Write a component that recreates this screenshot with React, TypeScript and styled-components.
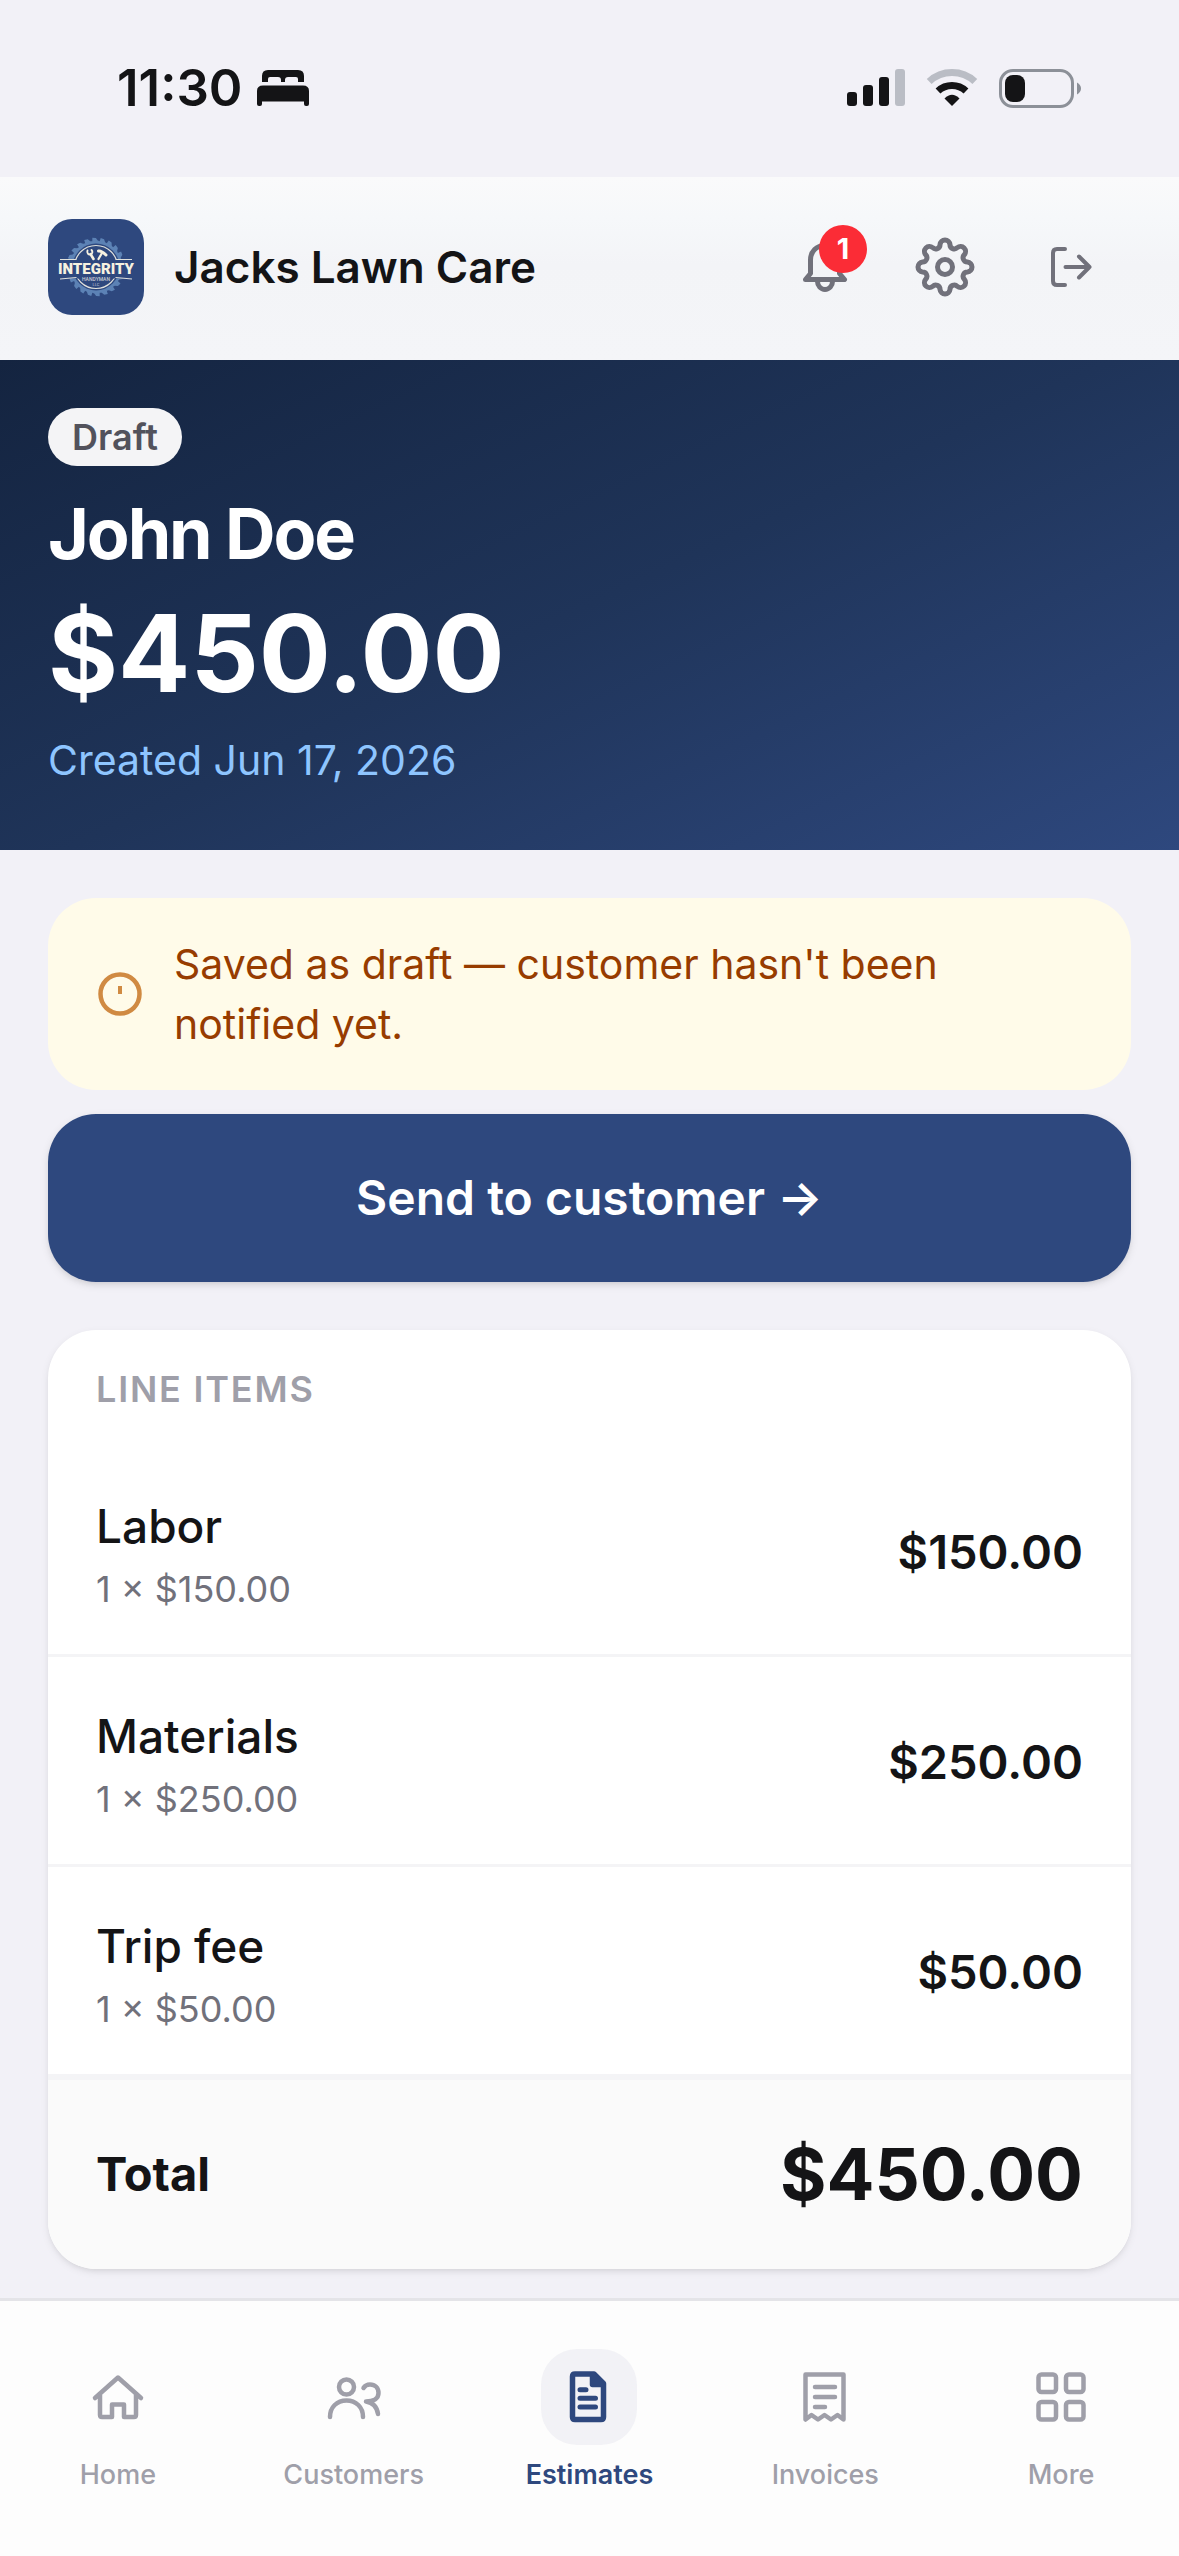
import React from "react";
import styled, { createGlobalStyle } from "styled-components";

const navy = "#2e487e";
const ink = "#141416";
const muted = "#71717b";
const faint = "#9f9fa9";
const canvas = "#f2f1f7";
const line = "#f4f4f6";

const GlobalStyle = createGlobalStyle`
  * { box-sizing: border-box; }
  body {
    margin: 0;
    background: ${canvas};
    color: ${ink};
    font-family: Inter, "Liberation Sans", sans-serif;
    -webkit-font-smoothing: antialiased;
  }
  button { font: inherit; border: 0; padding: 0; background: none; cursor: pointer; }
  h1, h2, p, ul { margin: 0; padding: 0; }
  ul { list-style: none; }
  svg { display: block; flex: none; }
`;

const Page = styled.div`
  display: flex;
  flex-direction: column;
  min-height: 100vh;
`;

const StatusBar = styled.div`
  display: flex;
  align-items: center;
  justify-content: space-between;
  padding: 58px 98px 59px 117px;
`;

const StatusGroup = styled.div<{ $gap: number }>`
  display: flex;
  align-items: center;
  gap: ${(p) => p.$gap}px;
`;

const Clock = styled.span`
  font-size: 51px;
  line-height: 60px;
  font-weight: 600;
`;

const Header = styled.header`
  display: flex;
  align-items: center;
  gap: 30px;
  padding: 42px 48px 45px;
  background: linear-gradient(#fafafb, #f6f8fa 22%, #f3f4f7 48%, #f4f5f8);
`;

const Company = styled.span`
  flex: 1;
  font-size: 44px;
  line-height: 60px;
  font-weight: 600;
`;

const Actions = styled.div<{ $gap: number }>`
  display: flex;
  gap: ${(p) => p.$gap}px;
`;

const IconButton = styled.button`
  position: relative;
  display: flex;
  align-items: center;
  justify-content: center;
  width: 120px;
  height: 96px;
  color: ${muted};
`;

const Badge = styled.span`
  position: absolute;
  top: 6px;
  right: 18px;
  width: 48px;
  height: 48px;
  border-radius: 50%;
  background: #fb2c36;
  color: #fff;
  font-size: 29px;
  line-height: 48px;
  font-weight: 700;
  text-align: center;
`;

const Hero = styled.section`
  display: flex;
  flex-direction: column;
  align-items: flex-start;
  padding: 48px 48px 60px;
  color: #fff;
  background: linear-gradient(155deg, #142440 0%, #1f3459 50%, ${navy} 100%);
`;

const Pill = styled.span`
  padding: 5px 24px;
  border-radius: 29px;
  background: #f4f4f6;
  color: #52525c;
  font-size: 36px;
  line-height: 48px;
  font-weight: 600;
`;

const CustomerName = styled.h1`
  margin-top: 24px;
  font-size: 70px;
  line-height: 88px;
  font-weight: 700;
  letter-spacing: -0.03em;
`;

const HeroAmount = styled.p`
  margin-top: 12px;
  font-size: 107px;
  line-height: 126px;
  font-weight: 700;
`;

const Created = styled.p`
  margin-top: 14px;
  color: #8ec5ff;
  font-size: 41px;
  line-height: 60px;
`;

const Main = styled.main`
  display: flex;
  flex-direction: column;
  padding: 48px 48px 29px;
`;

const Notice = styled.div`
  display: flex;
  align-items: center;
  gap: 30px;
  padding: 36px 48px;
  border-radius: 48px;
  background: #fffbe9;
  color: #973c00;
  font-size: 41px;
  line-height: 60px;
`;

const SendButton = styled.button`
  && {
    margin-top: 24px;
    padding: 54px 48px;
    border-radius: 48px;
    background: ${navy};
    color: #fff;
    font-size: 48px;
    line-height: 60px;
    font-weight: 600;
    box-shadow: 0 3px 9px rgba(0, 0, 0, 0.1), 0 3px 6px -3px rgba(0, 0, 0, 0.1);
  }
`;

const Card = styled.section`
  margin-top: 48px;
  overflow: hidden;
  border-radius: 48px;
  background: #fff;
  box-shadow: 0 3px 9px rgba(0, 0, 0, 0.07), 0 3px 6px -3px rgba(0, 0, 0, 0.1);
`;

const CardTitle = styled.h2`
  padding: 35px 48px 34px;
  color: ${faint};
  font-size: 36px;
  line-height: 48px;
  font-weight: 600;
  letter-spacing: 0.05em;
  text-transform: uppercase;
`;

const Item = styled.li`
  display: flex;
  align-items: center;
  justify-content: space-between;
  padding: 43px 48px 41px;

  & + & { border-top: 3px solid ${line}; }
`;

const ItemText = styled.div`
  display: flex;
  flex-direction: column;
  gap: 3px;
`;

const ItemName = styled.span`
  font-size: 46px;
  line-height: 72px;
  font-weight: 500;
`;

const ItemQuantity = styled.span`
  color: ${muted};
  font-size: 36px;
  line-height: 48px;
`;

const ItemPrice = styled.span`
  font-size: 47px;
  line-height: 60px;
  font-weight: 600;
`;

const TotalRow = styled.div`
  display: flex;
  align-items: center;
  justify-content: space-between;
  padding: 46px 48px 47px;
  border-top: 6px solid ${line};
  background: #fafafa;
  line-height: 96px;
  font-weight: 700;
`;

const TotalLabel = styled.span`
  font-size: 47px;
`;

const TotalAmount = styled.span`
  font-size: 71px;
`;

const TabBar = styled.nav`
  position: sticky;
  bottom: 0;
  display: grid;
  grid-template-columns: repeat(5, 1fr);
  margin-top: auto;
  padding: 48px 0 63px;
  border-top: 3px solid #e4e4e8;
  background: #fdfdfd;
`;

const Tab = styled.a<{ $active?: boolean }>`
  display: flex;
  flex-direction: column;
  align-items: center;
  gap: 12px;
  color: ${(p) => (p.$active ? navy : faint)};
  font-size: 27px;
  line-height: 36px;
  font-weight: ${(p) => (p.$active ? 600 : 500)};
  text-decoration: none;
`;

const TabIcon = styled.span<{ $active?: boolean }>`
  display: flex;
  align-items: center;
  justify-content: center;
  width: 96px;
  height: 96px;
  border-radius: 36px;
  background: ${(p) => (p.$active ? "#f2f2f6" : "transparent")};
`;

type IconProps = { stroke?: number; children: React.ReactNode };

const Icon = ({ stroke = 5, children }: IconProps) => (
  <svg
    width="60"
    height="60"
    viewBox="0 0 60 60"
    fill="none"
    stroke="currentColor"
    strokeWidth={stroke}
    strokeLinecap="round"
    strokeLinejoin="round"
    aria-hidden="true"
  >
    {children}
  </svg>
);

const point = (radius: number, degrees: number, center: number) => {
  const a = (degrees * Math.PI) / 180;
  return `${(center + radius * Math.cos(a)).toFixed(2)} ${(center + radius * Math.sin(a)).toFixed(2)}`;
};

/* Eight round lobes joined by round valleys. */
const gearPath = (() => {
  let d = `M${point(23, -12.5, 30)}`;
  for (let i = 0; i < 8; i++) {
    d += `A5 5 0 0 1 ${point(23, i * 45 + 12.5, 30)}`;
    d += `A4.3 4.3 0 0 0 ${point(23, i * 45 + 32.5, 30)}`;
  }
  return d + "Z";
})();

/* Saw blade with slanted teeth. */
const sawPath = (() => {
  const teeth = 22;
  const step = 360 / teeth;
  let d = "";
  for (let i = 0; i < teeth; i++) {
    const a = i * step;
    d += `${i ? "L" : "M"}${point(26, a, 48)}L${point(29.5, a + 1, 48)}L${point(29, a + 8, 48)}L${point(26.5, a + 12, 48)}`;
  }
  return d + "Z";
})();

const Logo = () => (
  <svg width="96" height="96" viewBox="0 0 96 96" role="img" aria-label="Integrity Handyman LLC">
    <rect width="96" height="96" rx="24" fill={navy} />
    <path d={sawPath} fill="#5c82b5" />
    <circle cx="48" cy="48" r="23.5" fill={navy} />
    <circle cx="48" cy="48" r="21.5" fill="none" stroke="#dfe0dc" strokeWidth="1.2" />
    <rect x="10" y="40.5" width="76" height="19" fill={navy} />
    <path d="M12 40.5H28.5M67.5 40.5H84M12 60L28.5 58.5M67.5 58.5L84 60" stroke="#dfe0dc" strokeWidth="1.1" fill="none" />
    <g stroke="#f6f1e0" strokeLinecap="round" fill="none">
      <path d="M42.5 35L45.5 40" strokeWidth="2.6" />
      <path d="M39.5 31.5C38.5 34 40.5 36 42.5 35.5S45 32.5 43.5 31" strokeWidth="1.9" />
      <path d="M54 34L50.5 40" strokeWidth="2.2" />
      <path d="M50.5 32C53 31.5 55 33 58 36" strokeWidth="3" />
    </g>
    <g fill="#f6f1e0" textAnchor="middle" fontFamily="Roboto, sans-serif">
      <text x="48" y="55" fontSize="15" fontWeight="900">INTEGRITY</text>
      <text x="48" y="61.5" fontSize="5" fontWeight="500" fill="#c9cdd3">HANDYMAN</text>
      <text x="48" y="66.5" fontSize="4" fontWeight="500" fill="#aab4c6">LLC</text>
    </g>
  </svg>
);

const BedIcon = () => (
  <svg width="52" height="36" viewBox="0 0 52 36" fill={ink} aria-hidden="true">
    <path d="M5 12V6Q5 0 11 0H41Q47 0 47 6V12H41V9Q41 7 39 7H31Q28 7 28 10V12H24V10Q24 7 21 7H13Q11 7 11 9V12Z" />
    <path d="M0 21Q0 15.5 6 15.5H46Q52 15.5 52 21V34Q52 36 50 36H49Q47 36 47 34V31.5H5V34Q5 36 3 36H2Q0 36 0 34Z" />
  </svg>
);

const SignalIcon = () => (
  <svg width="58" height="38" viewBox="0 0 58 38" fill={ink} aria-hidden="true">
    <rect x="0" y="23" width="10" height="14" rx="3" />
    <rect x="16" y="16" width="10" height="21" rx="3" />
    <rect x="32" y="8" width="10" height="29" rx="3" />
    <rect x="48" y="0" width="10" height="37" rx="3" fill="#babdc5" />
  </svg>
);

const WifiIcon = () => (
  <svg width="52" height="38" viewBox="0 0 52 38" fill="none" strokeWidth="7" aria-hidden="true">
    <path d="M3.2 12.5A33.5 33.5 0 0 1 48.8 12.5" stroke="#babdc5" />
    <path d="M12 22A20.5 20.5 0 0 1 40 22" stroke={ink} />
    <path d="M26 37L18.5 29.5Q26 22 33.5 29.5Z" fill={ink} />
  </svg>
);

const BatteryIcon = () => (
  <svg width="82" height="39" viewBox="0 0 82 39" aria-hidden="true">
    <rect x="1.5" y="1.5" width="72" height="36" rx="12.5" fill="none" stroke="#8c9098" strokeWidth="3" />
    <rect x="6" y="6" width="20" height="27" rx="8" fill={ink} />
    <path d="M78 13.5Q82 16 82 19.5T78 25.5Z" fill="#8c9098" />
  </svg>
);

const NoticeIcon = () => (
  <svg width="48" height="48" viewBox="0 0 48 48" fill="none" stroke="#d08a42" aria-hidden="true">
    <circle cx="24" cy="24" r="19.5" strokeWidth="4.5" />
    <path d="M24 16V24" strokeWidth="4" />
  </svg>
);

const items = [
  { name: "Labor", quantity: "1 × $150.00", price: "$150.00" },
  { name: "Materials", quantity: "1 × $250.00", price: "$250.00" },
  { name: "Trip fee", quantity: "1 × $50.00", price: "$50.00" },
];

const tabs = [
  {
    label: "Home",
    icon: (
      <Icon stroke={4.5}>
        <path d="M7 31L30 10.5L53 31M12 27V48Q12 50 14 50H24V37.5H36V50H46Q48 50 48 48V27" />
      </Icon>
    ),
  },
  {
    label: "Customers",
    icon: (
      <Icon stroke={4.5}>
        <circle cx="22.5" cy="20" r="7.5" />
        <path d="M6 50C6 40 13 33.5 22.5 33.5S39 40 39 50" />
        <path d="M39.5 21C41 18.5 43.5 17.5 46 17.5C51 17.5 54.5 21 54.5 26C54.5 31 50.5 34.5 42 34.5C48.5 35.5 53 40 54 47" />
      </Icon>
    ),
  },
  {
    label: "Estimates",
    active: true,
    icon: (
      <Icon stroke={5.5}>
        <path d="M16 7H35L44.5 16.5V50Q44.5 52.5 42 52.5H16Q13.5 52.5 13.5 50V9.5Q13.5 7 16 7Z" />
        <path d="M33.5 8V17.5H43Z" fill="currentColor" />
        <path d="M21 22.7H27M21 31.3H36.5M21 40H36.5" strokeWidth="5" />
      </Icon>
    ),
  },
  {
    label: "Invoices",
    icon: (
      <Icon stroke={4.5}>
        <path d="M10.5 52.5V7.5H48.5V52.5L42.5 48L36 52.5L29.5 48L23 52.5L16.5 48Z" />
        <path d="M20 20H40M20 30H40M20 40H30" />
      </Icon>
    ),
  },
  {
    label: "More",
    icon: (
      <Icon stroke={4.5}>
        <rect x="7.5" y="7.5" width="17.5" height="17.5" rx="3" />
        <rect x="35" y="7.5" width="17.5" height="17.5" rx="3" />
        <rect x="7.5" y="35" width="17.5" height="17.5" rx="3" />
        <rect x="35" y="35" width="17.5" height="17.5" rx="3" />
      </Icon>
    ),
  },
];

export default function App() {
  return (
    <Page>
      <GlobalStyle />
      <StatusBar>
        <StatusGroup $gap={15}>
          <Clock>11:30</Clock>
          <BedIcon />
        </StatusGroup>
        <StatusGroup $gap={21}>
          <SignalIcon />
          <WifiIcon />
          <BatteryIcon />
        </StatusGroup>
      </StatusBar>

      <Header>
        <Logo />
        <Company>Jacks Lawn Care</Company>
        <Actions $gap={6}>
          <Actions $gap={0}>
            <IconButton type="button" aria-label="Notifications">
              <Icon>
                <path d="M10.5 42.5L15.5 36.5V23C15.5 14.5 21.5 8.5 30 8.5S44.5 14.5 44.5 23V36.5L49.5 42.5Z" />
                <path d="M22.5 44.5A7.5 8 0 0 0 37.5 44.5" />
              </Icon>
              <Badge>1</Badge>
            </IconButton>
            <IconButton type="button" aria-label="Settings">
              <Icon>
                <path d={gearPath} />
                <circle cx="30" cy="30" r="7.5" />
              </Icon>
            </IconButton>
          </Actions>
          <IconButton type="button" aria-label="Log out">
            <Icon stroke={4}>
              <path d="M24 12H16Q12 12 12 16V44Q12 48 16 48H24M24.5 30H48.5M38 19.5L48.5 30L38 40.5" />
            </Icon>
          </IconButton>
        </Actions>
      </Header>

      <Hero>
        <Pill>Draft</Pill>
        <CustomerName>John Doe</CustomerName>
        <HeroAmount>$450.00</HeroAmount>
        <Created>Created Jun 17, 2026</Created>
      </Hero>

      <Main>
        <Notice role="status">
          <NoticeIcon />
          <p>Saved as draft — customer hasn't been notified yet.</p>
        </Notice>
        <SendButton type="button">Send to customer →</SendButton>

        <Card>
          <CardTitle>Line items</CardTitle>
          <ul>
            {items.map((item) => (
              <Item key={item.name}>
                <ItemText>
                  <ItemName>{item.name}</ItemName>
                  <ItemQuantity>{item.quantity}</ItemQuantity>
                </ItemText>
                <ItemPrice>{item.price}</ItemPrice>
              </Item>
            ))}
          </ul>
          <TotalRow>
            <TotalLabel>Total</TotalLabel>
            <TotalAmount>$450.00</TotalAmount>
          </TotalRow>
        </Card>
      </Main>

      <TabBar aria-label="Main">
        {tabs.map((tab) => (
          <Tab key={tab.label} href="#" $active={tab.active} aria-current={tab.active ? "page" : undefined}>
            <TabIcon $active={tab.active}>{tab.icon}</TabIcon>
            {tab.label}
          </Tab>
        ))}
      </TabBar>
    </Page>
  );
}
